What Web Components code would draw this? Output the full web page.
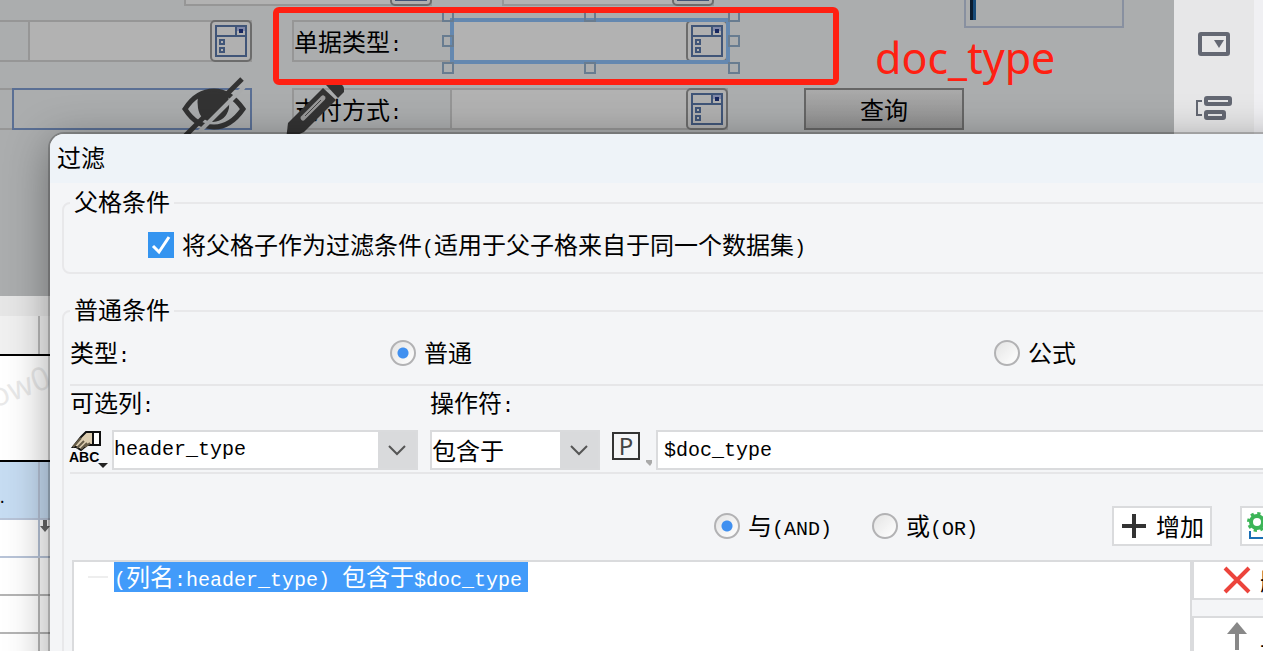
<!DOCTYPE html>
<html lang="zh-CN">
<head>
<meta charset="UTF-8">
<title>过滤</title>
<style>
  html, body { margin: 0; height: 100%; overflow: hidden; }
  body {
    font-family: "Noto Sans CJK SC", sans-serif;
    font-size: 24px;
    line-height: 28px;
    color: #000;
    --mono: "Liberation Mono", "Noto Sans CJK SC", monospace;
    --line: #dadbdd;
    --panel: #f4f5f7;
  }
</style>
</head>
<body>
<report-workspace></report-workspace>

<script>
// Half-width text: 20px mono glyphs advance half of a 24px CJK glyph
class HalfText extends HTMLElement {
  connectedCallback() {
    this.attachShadow({ mode: 'open' }).innerHTML =
      '<style>:host { display: inline; font-family: var(--mono); font-size: 20px; line-height: 20px; white-space: pre; }</style><slot></slot>';
  }
}
customElements.define('half-text', HalfText);

// Icons used by the designer and the dialog
const ICONS = {
  combo: [32, 32, `<path d="M1 1h30v30H1zM1 11h30M21 1v10" fill="none" stroke="#405578" stroke-width="2"/>
    <path d="M22 2h8v4h-8z" fill="#8088a8"/><path d="M24 4h4v4h-4z" fill="#182860"/>
    <path d="M5 15h4v4H5zM5 23h4v4H5z" fill="none" stroke="#405578" stroke-width="2"/>`],
  eye: [64, 58, `<path d="M3 31C12 17 22 13 32 13s20 5 29 18C52 44 42 49 32 49S12 45 3 31z" fill="none" stroke="#333" stroke-width="5"/>
    <path d="M16 18q16-9 30 0 2 6 1 12-3 13-16 14-13-1-15-14-1-6 0-12z" fill="#333"/>
    <path d="M62 9L14 57" stroke="#a9abac" stroke-width="4"/>
    <path d="M60 1L2 59" stroke="#333" stroke-width="5"/>`],
  pencil: [60, 56, `<path d="M37 8l13 12L18 52 0 60l2-17z" fill="#333"/>
    <path d="M40 5q6-7 13-3 6 4 5 10l-6 6z" fill="#333"/>
    <path d="M37 18L17 38" stroke="#999" stroke-width="5" stroke-linecap="round"/>
    <path d="M35 20L19 36" stroke="#444" stroke-width="1"/>`],
  widget: [32, 24, `<rect x="2" y="2" width="28" height="20" rx="1" fill="none" stroke="#646873" stroke-width="4"/>
    <path d="M16 8h10l-5 8z" fill="#646873"/>`],
  tree: [36, 24, `<path d="M6 5H1v14h5" fill="none" stroke="#646873" stroke-width="2"/>
    <rect x="10" y="2" width="24" height="6" rx="1" fill="none" stroke="#646873" stroke-width="4"/>
    <rect x="10" y="16" width="18" height="6" rx="1" fill="none" stroke="#646873" stroke-width="4"/>`],
  column: [38, 38, `<path d="M3 16l8-10 5-5h12v13H17l-6 5-5-3z" fill="#dccdb0" stroke="#111" stroke-width="2"/>
    <path d="M3 16l8-9M7 17l7-7M11 18l6-6M15 16l5-4" stroke="#665c48" stroke-width="2"/>
    <path d="M23 1h7v13h-7z" fill="#fff" stroke="#111" stroke-width="2"/>
    <path d="M28 32h10l-5 5z" fill="#222"/>`],
  plus: [24, 24, `<path d="M12 0v24M0 12h24" stroke="#333" stroke-width="4"/>`],
  gear: [26, 28, `<circle cx="12" cy="10" r="6" fill="none" stroke="#3cb558" stroke-width="4"/>
    <circle cx="12" cy="10" r="8" fill="none" stroke="#3cb558" stroke-width="4" stroke-dasharray="3 3.28"/>
    <path d="M5 19v7h24" fill="none" stroke="#1a6fb5" stroke-width="2"/>`],
  cross: [26, 26, `<path d="M1 1l24 24M25 1L1 25" stroke="#ec443c" stroke-width="4"/>`],
  up: [26, 28, `<path d="M13 6v22" stroke="#888" stroke-width="4"/><path d="M13 0l10 12H3z" fill="#888"/>`],
  chevron: [18, 12, `<path d="M1 2l8 8 8-8" fill="none" stroke="#555" stroke-width="2"/>`],
  drop: [10, 12, `<path d="M3 0h4v6h3l-5 6-5-6h3z" fill="#666"/>`],
  corner: [6, 6, `<path d="M0 0h6v3L4 6 0 2z" fill="#aaa"/>`]
};

class UiIcon extends HTMLElement {
  connectedCallback() {
    const [w, h, body] = ICONS[this.getAttribute('name')];
    this.attachShadow({ mode: 'open' }).innerHTML = `
      <style>:host { display: block; flex: none; } svg { display: block; overflow: visible; }</style>
      <svg width="${w}" height="${h}" viewBox="0 0 ${w} ${h}" aria-hidden="true">${body}</svg>`;
  }
}
customElements.define('ui-icon', UiIcon);

// Form cell of the designer: kind = label | field | active
class DesignCell extends HTMLElement {
  connectedCallback() {
    const kind = this.getAttribute('kind') || 'field';
    this.attachShadow({ mode: 'open' }).innerHTML = `
      <style>
        :host {
          display: flex; align-items: center; flex: none; box-sizing: border-box;
          height: 42px; border: 2px solid #969696; position: relative;
        }
        :host([kind="field"]) { background: #b2b2b2; }
        :host([kind="label"]) { border-right-width: 0; }
        :host([kind="active"]) { border-color: #5a6f94; }
        span { white-space: nowrap; }
        button {
          width: 42px; height: 42px; margin: -2px; padding: 0; flex: none;
          display: grid; place-items: center;
          border: 2px solid #6c6c6c; border-radius: 5px; background: #b0b0b0;
        }
        .end { margin-left: auto; }
      </style>
      <span><slot></slot></span>
      ${kind === 'field' && this.hasAttribute('drop')
        ? '<button class="end" aria-label="下拉"><ui-icon name="combo"></ui-icon></button>' : ''}
      <slot name="over"></slot>`;
  }
}
customElements.define('design-cell', DesignCell);

class FormDesigner extends HTMLElement {
  connectedCallback() {
    this.attachShadow({ mode: 'open' }).innerHTML = `
      <style>
        :host { display: block; height: 100%; background: #abadae; position: relative; }
        .row { display: flex; height: 42px; margin-bottom: 26px; }
        .row.cut { height: 20px; margin: 0; align-items: flex-start; }
        .cut design-cell { margin-top: -36px; }
        .preview {
          width: 160px; height: 28px; box-sizing: border-box; margin-left: 250px; flex: none;
          border: 2px solid #8890a0; border-top: 0;
        }
        .preview i { display: block; width: 6px; height: 20px; margin-left: 4px; background: linear-gradient(90deg, #0a1c30 50%, #174a78 50%); }
        .query {
          width: 160px; height: 42px; margin-left: 76px; padding: 0; flex: none;
          font: inherit; line-height: 36px; color: inherit;
          border: 2px solid #666; background: linear-gradient(#aaa, #909090);
        }
        .a { width: 30px; border-left: 0; }
        .b { width: 224px; margin-left: -2px; margin-right: 40px; }
        .c { width: 158px; }
        .d { width: 278px; }
        .e { width: 252px; box-sizing: border-box; display: flex; margin-right: 40px; border-bottom: 2px solid #969696; border-top: 2px solid #969696; }
        .e design-cell { width: 240px; margin: -2px 0 0 auto; }
        .over { position: absolute; }
        .eye { right: 4px; top: -12px; }
        .pen { left: -8px; top: -10px; }
        /* selection frame with its resize handles */
        .sel { inset: -4px -4px -4px -2px; border: 4px solid #6488b0; }
        .sel i { position: absolute; width: 8px; height: 8px; border: 2px solid #687c90; }
        .sel i.l { left: -12px; } .sel i.r { right: -14px; } .sel i.m { left: calc(50% - 6px); }
        .sel i.t { top: -12px; } .sel i.c1 { top: calc(50% - 6px); } .sel i.bt { bottom: -14px; }
      </style>
      <div class="row cut">
        <design-cell kind="field" drop style="width:248px;margin-left:184px"></design-cell>
        <design-cell kind="field" drop style="width:212px;margin-left:70px"></design-cell>
        <div class="preview"><i></i></div>
      </div>
      <div class="row">
        <design-cell class="a" kind="label"></design-cell>
        <design-cell class="b" kind="field" drop></design-cell>
        <design-cell class="c" kind="label">单据类型<half-text>:</half-text></design-cell>
        <design-cell class="d" kind="field" drop>
          <div slot="over" class="over sel"><i class="l t"></i><i class="m t"></i><i class="r t"></i><i class="l c1"></i><i class="r c1"></i><i class="l bt"></i><i class="m bt"></i><i class="r bt"></i></div>
        </design-cell>
      </div>
      <div class="row">
        <div class="e"><design-cell kind="active"><ui-icon slot="over" class="over eye" name="eye"></ui-icon></design-cell></div>
        <design-cell class="c" kind="label">支付方式<half-text>:</half-text><ui-icon slot="over" class="over pen" name="pencil"></ui-icon></design-cell>
        <design-cell class="d" kind="field" drop></design-cell>
        <button class="query">查询</button>
      </div>`;
  }
}
customElements.define('form-designer', FormDesigner);

// Spreadsheet area below the form
class SheetGrid extends HTMLElement {
  connectedCallback() {
    this.attachShadow({ mode: 'open' }).innerHTML = `
      <style>
        :host { display: block; background: #fff; position: relative; }
        .bar { height: 20px; background: #e6e6e6; }
        .r { display: grid; grid-template-columns: 38px 1fr; height: 36px; border-bottom: 2px solid #b4b4b4; }
        .r > * + * { border-left: 2px solid #b8b8b8; }
        .head { height: 38px; background: #f0f0f0; border-color: #000; }
        .tall { height: 104px; border-color: #000; }
        .tall > * + * { border-color: transparent; }
        .blue { height: 56px; background: #c6dcf2; border-color: #b8c4d8; }
        .blue > * + *, .pale > * + * { border-color: #b4c0d4; }
        .pale { border-color: #b8c4d8; }
        .dot { line-height: 68px; font-size: 16px; }
        .mark { position: absolute; left: -12px; top: 68px; font: 32px "Open Sans", sans-serif; color: #e9e9e9; transform: rotate(-20deg); }
      </style>
      <div class="bar"></div>
      <div class="r head"><span></span><span></span></div>
      <div class="r tall"><span></span><span></span></div>
      <div class="r blue"><span class="dot">.</span><span></span></div>
      <div class="r pale"><span></span><span><ui-icon name="drop"></ui-icon></span></div>
      <div class="r"><span></span><span></span></div>
      <div class="r"><span></span><span></span></div>
      <div class="r"><span></span><span></span></div>
      <div class="mark" aria-hidden="true">ow0</div>`;
  }
}
customElements.define('sheet-grid', SheetGrid);

// Tick box or radio with its caption
class ChoiceItem extends HTMLElement {
  connectedCallback() {
    const type = this.getAttribute('type') || 'radio';
    this.attachShadow({ mode: 'open' }).innerHTML = `
      <style>
        :host { display: block; flex: none; white-space: nowrap; }
        label { display: flex; align-items: center; gap: 8px; height: 28px; }
        span { padding-bottom: 2px; }
        input { appearance: none; width: 26px; height: 26px; margin: 0; flex: none; box-sizing: border-box; }
        input[type="radio"] { border: 2px solid #b2b2b4; border-radius: 50%; background: linear-gradient(135deg, #e4e4e4, #fff); }
        input[type="radio"]:checked { background: radial-gradient(circle, #4090f0 5px, transparent 6px), linear-gradient(135deg, #e4e4e4, #fff); }
        input[type="checkbox"]:checked {
          background: #3494f0 url('data:image/svg+xml,<svg xmlns="http://www.w3.org/2000/svg" viewBox="0 0 26 26"><path d="M5 14l6 6L21 5" fill="none" stroke="white" stroke-width="3"/></svg>');
        }
      </style>
      <label><input type="${type}" name="g" ${this.hasAttribute('checked') ? 'checked' : ''}><span><slot></slot></span></label>`;
  }
}
customElements.define('choice-item', ChoiceItem);

class ComboBox extends HTMLElement {
  connectedCallback() {
    this.attachShadow({ mode: 'open' }).innerHTML = `
      <style>
        :host { display: grid; height: 40px; }
        select {
          grid-area: 1 / 1; appearance: none; width: 100%; height: 40px; margin: 0; padding: 0;
          border: 2px solid var(--line); border-radius: 0; color: #000; font: inherit; outline: 0;
          background: linear-gradient(90deg, #fff calc(100% - 38px), #d9dadc 0);
        }
        select.half { font-family: var(--mono); font-size: 20px; }
        ui-icon { grid-area: 1 / 1; justify-self: end; align-self: center; margin-right: 12px; pointer-events: none; }
      </style>
      <select class="${this.hasAttribute('half') ? 'half' : ''}" aria-label="${this.getAttribute('label')}">
        <option>${this.getAttribute('value')}</option>
      </select>
      <ui-icon name="chevron"></ui-icon>`;
  }
}
customElements.define('combo-box', ComboBox);

class IconButton extends HTMLElement {
  connectedCallback() {
    this.attachShadow({ mode: 'open' }).innerHTML = `
      <style>
        :host { display: block; flex: none; }
        button {
          display: flex; align-items: center; gap: 10px; width: 100%; height: 40px;
          padding: 0 4px 0 var(--pad, 8px); white-space: nowrap;
          border: 2px solid var(--line); background: #fff; color: #000; font: inherit;
        }
      </style>
      <button><ui-icon name="${this.getAttribute('icon')}"></ui-icon><slot></slot></button>`;
  }
}
customElements.define('icon-button', IconButton);

class GroupBox extends HTMLElement {
  connectedCallback() {
    this.attachShadow({ mode: 'open' }).innerHTML = `
      <style>
        :host { display: block; margin: 0 12px 25px; }
        fieldset { margin: 0; min-width: 0; border: 2px solid #e8e8ea; border-radius: 8px; padding: 0 6px 13px; }
        legend { padding: 0 4px 4px; line-height: 20px; }
      </style>
      <fieldset><legend>${this.getAttribute('caption')}</legend><slot></slot></fieldset>`;
  }
}
customElements.define('group-box', GroupBox);

class FilterDialog extends HTMLElement {
  connectedCallback() {
    this.attachShadow({ mode: 'open' }).innerHTML = `
      <style>
        :host {
          display: block; background: var(--panel); border-radius: 14px 0 0 0;
          box-shadow: 0 0 0 2px rgba(0,0,0,.2), 0 8px 44px rgba(0,0,0,.38);
        }
        header { height: 49px; line-height: 46px; padding-left: 7px; background: #eef3f8; border-radius: 14px 0 0 0; margin-bottom: 8px; }
        hr { border: 0; height: 2px; margin: 0; background: #e6e6e8; }
        .parent { margin: 16px 0 0 78px; }
        .type { display: grid; grid-template-columns: 320fr 604fr 338fr; height: 28px; line-height: 26px; margin: 16px 0 17px; }
        .cond { display: flex; align-items: flex-end; gap: 12px; padding: 3px 0 2px; }
        .cap { display: block; height: 28px; line-height: 26px; margin-bottom: 13px; }
        .col { width: 348px; }
        .col > div { display: flex; gap: 4px; }
        .col combo-box { flex: 1; }
        .op { width: 170px; }
        .pick, .param { padding: 0; border: 0; background: none; position: relative; flex: none; }
        .pick { width: 38px; height: 40px; }
        .pick span { position: absolute; left: -1px; bottom: 5px; font: bold 14px/15px "Liberation Sans", sans-serif; color: #000; }
        .param { width: 32px; height: 40px; color: #444; }
        .param b {
          display: block; width: 24px; height: 24px; margin-bottom: 8px; border: 2px solid #333;
          font: 24px/24px "Noto Sans", sans-serif;
        }
        .param ui-icon { position: absolute; right: -8px; bottom: 4px; }
        .value {
          flex: 1; min-width: 0; height: 40px; box-sizing: border-box; padding: 0 6px; border: 2px solid var(--line);
          font: 20px var(--mono); color: #000; background: #fff;
        }
        .logic { display: flex; align-items: center; gap: 40px; margin: 32px 0 14px 644px; }
        .logic icon-button { width: 100px; margin-left: 94px; }
        .logic icon-button + icon-button { width: 110px; margin-left: -12px; --pad: 3px; }
        .result { display: flex; margin-left: 2px; }
        .tree { flex: 1; min-width: 0; margin: 0; padding: 0 0 0 14px; list-style: none; min-height: 240px; border: 2px solid var(--line); background: #fff; }
        .tree li { display: flex; align-items: center; gap: 6px; }
        .tree i { width: 20px; height: 2px; background: #eee; }
        .tree span { height: 30px; line-height: 28px; padding-right: 6px; background: #429bfa; color: #fff; white-space: pre; }
        .side { width: 140px; display: grid; gap: 16px; align-content: start; --pad: 30px; }
      </style>
      <header>过滤</header>
      <group-box caption="父格条件">
        <choice-item class="parent" type="checkbox" checked>将父格子作为过滤条件<half-text>(</half-text>适用于父子格来自于同一个数据集<half-text>)</half-text></choice-item>
      </group-box>
      <group-box caption="普通条件">
        <div class="type">
          <span>类型<half-text>:</half-text></span>
          <choice-item checked>普通</choice-item>
          <choice-item>公式</choice-item>
        </div>
        <hr>
        <div class="cond">
          <div class="col">
            <span class="cap">可选列<half-text>:</half-text></span>
            <div>
              <button class="pick" aria-label="选择列"><ui-icon name="column"></ui-icon><span>ABC</span></button>
              <combo-box half label="可选列" value="header_type"></combo-box>
            </div>
          </div>
          <div class="op">
            <span class="cap">操作符<half-text>:</half-text></span>
            <combo-box label="操作符" value="包含于"></combo-box>
          </div>
          <button class="param"><b>P</b><ui-icon name="corner"></ui-icon></button>
          <input class="value" value="$doc_type" aria-label="值">
        </div>
        <hr>
        <div class="logic">
          <choice-item checked>与<half-text>(AND)</half-text></choice-item>
          <choice-item>或<half-text>(OR)</half-text></choice-item>
          <icon-button icon="plus">增加</icon-button>
          <icon-button icon="gear">修改</icon-button>
        </div>
        <div class="result">
          <ul class="tree">
            <li><i></i><span><half-text>(</half-text>列名<half-text>:header_type) </half-text>包含于<half-text>$doc_type</half-text></span></li>
          </ul>
          <div class="side">
            <icon-button icon="cross">删除</icon-button>
            <icon-button icon="up">上移</icon-button>
          </div>
        </div>
      </group-box>`;
  }
}
customElements.define('filter-dialog', FilterDialog);

// Red frame and note drawn over the designer
class RedNote extends HTMLElement {
  connectedCallback() {
    this.attachShadow({ mode: 'open' }).innerHTML = `
      <style>
        :host { display: flex; align-items: center; gap: 36px; color: #ff2012; font: 43px "Noto Sans", sans-serif; }
        .frame { width: 554px; height: 66px; border: 6px solid; border-radius: 6px; }
        p { margin: 24px 0 0; line-height: 52px; }
      </style>
      <div class="frame"></div><p><slot></slot></p>`;
  }
}
customElements.define('red-note', RedNote);

class ReportWorkspace extends HTMLElement {
  connectedCallback() {
    this.attachShadow({ mode: 'open' }).innerHTML = `
      <style>
        :host { display: flex; height: 100%; position: relative; overflow: hidden; background: #f0f0f3; }
        main { flex: 1; min-width: 0; display: grid; grid-template-rows: 296px 1fr; overflow: hidden; }
        nav { width: 80px; margin-right: 9px; background: #e7e7e8; display: flex; flex-direction: column; align-items: center; gap: 40px; padding-top: 32px; box-sizing: border-box; }
        red-note { position: absolute; left: 273px; top: 7px; }
        filter-dialog { position: absolute; left: 50px; right: -89px; top: 134px; bottom: -200px; }
      </style>
      <main><form-designer></form-designer><sheet-grid></sheet-grid></main>
      <nav><ui-icon name="widget"></ui-icon><ui-icon name="tree"></ui-icon></nav>
      <red-note>doc_type</red-note>
      <filter-dialog></filter-dialog>`;
  }
}
customElements.define('report-workspace', ReportWorkspace);
</script>
</body>
</html>
